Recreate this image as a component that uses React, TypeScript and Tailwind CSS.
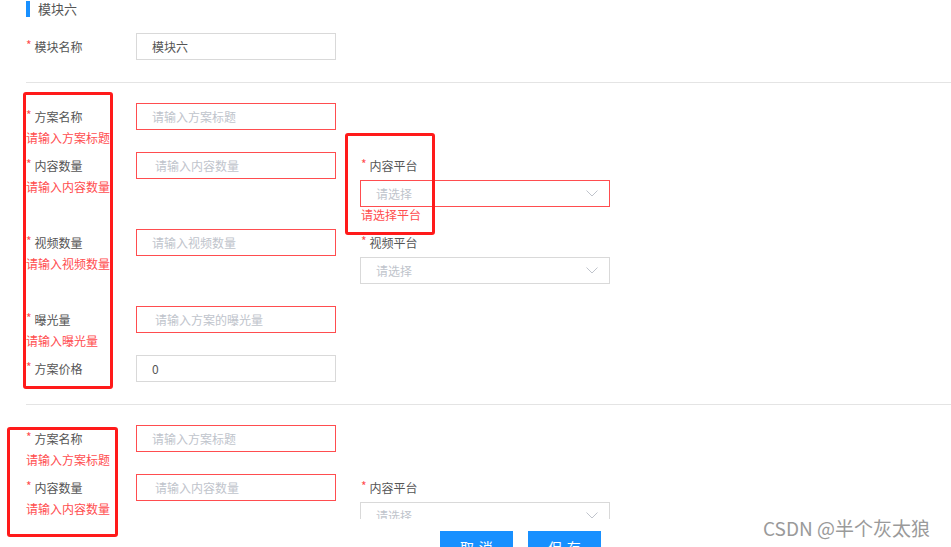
import React from "react";

const FONT = { fontFamily: '"Noto Sans CJK SC", "Noto Sans", sans-serif' };

function Star() {
  return <span className="text-[#ff4d4f] text-[12px] mr-[3px] relative -top-[2px]">*</span>;
}

function Input({ text, placeholder, error, pl = "pl-[15px]" }: { text?: string; placeholder?: string; error?: boolean; pl?: string }) {
  return (
    <div
      className={`w-[200px] h-[27px] border flex items-center text-[12px] ${pl} ${
        error ? "border-[#ff4d4f]" : "border-[#d9d9d9]"
      }`}
    >
      {text ? <span className="text-[#555]">{text}</span> : <span className="text-[#c0c4cc]">{placeholder}</span>}
    </div>
  );
}

function Chevron() {
  return (
    <svg width="12" height="7" viewBox="0 0 12 7" fill="none" className="mr-[11px]">
      <path d="M0.5 0.5 L6 6 L11.5 0.5" stroke="#c0c4cc" strokeWidth="1" />
    </svg>
  );
}

function LeftItem({ label, placeholder, text, error, pl }: { label: string; placeholder?: string; text?: string; error?: string; pl?: string }) {
  return (
    <div className="flex items-start">
      <div className="w-[110px] flex flex-col">
        <div className="h-[27px] flex items-center text-[12px] text-[#555]">
          <Star />
          {label}
        </div>
        <div className="h-[22px] text-[12px] leading-[16px] text-[#ff4d4f] whitespace-nowrap">{error}</div>
      </div>
      <Input placeholder={placeholder} text={text} error={!!error} pl={pl} />
    </div>
  );
}

function RightItem({ label, error }: { label: string; error?: string }) {
  return (
    <div className="flex flex-col">
      <div className="h-[27px] flex items-center text-[12px] text-[#555] pl-[1px]">
        <Star />
        {label}
      </div>
      <div
        className={`mt-[1px] w-[250px] h-[27px] border flex items-center justify-between pl-[15px] text-[12px] text-[#c0c4cc] ${
          error ? "border-[#ff4d4f]" : "border-[#d9d9d9]"
        }`}
      >
        <span>请选择</span>
        <Chevron />
      </div>
      <div className="h-[22px] text-[12px] leading-[16px] text-[#ff4d4f] pl-[1px]">{error}</div>
    </div>
  );
}

export default function App() {
  return (
    <div className="relative h-[547px] w-[951px] overflow-hidden bg-white" style={FONT}>
      <div className="h-[519px] overflow-hidden pl-[26px]">
        {/* title */}
        <div className="flex items-center h-[16px] mt-[1px]">
          <div className="w-[4px] h-[16px] bg-[#1890ff]" />
          <span className="ml-[8px] text-[13px] text-[#555]">模块六</span>
        </div>

        <div className="mt-[16px] flex items-start">
          <div className="w-[110px] h-[27px] flex items-center text-[12px] text-[#555]">
            <Star />
            模块名称
          </div>
          <Input text="模块六" />
        </div>

        <div className="mt-[22px] h-px bg-[#e4e4e4]" />

        {/* plan 1 */}
        <div className="mt-[20px] flex flex-col">
          <LeftItem label="方案名称" placeholder="请输入方案标题" error="请输入方案标题" />
          <div className="flex items-start gap-[24px]">
            <LeftItem label="内容数量" placeholder="请输入内容数量" error="请输入内容数量" pl="pl-[18px]" />
            <RightItem label="内容平台" error="请选择平台" />
          </div>
          <div className="flex items-start gap-[24px]">
            <LeftItem label="视频数量" placeholder="请输入视频数量" error="请输入视频数量" />
            <RightItem label="视频平台" />
          </div>
          <LeftItem label="曝光量" placeholder="请输入方案的曝光量" error="请输入曝光量" pl="pl-[18px]" />
          <LeftItem label="方案价格" text="0" />
        </div>

        <div className="h-px bg-[#e4e4e4]" />

        {/* plan 2 */}
        <div className="mt-[20px] flex flex-col">
          <LeftItem label="方案名称" placeholder="请输入方案标题" error="请输入方案标题" />
          <div className="flex items-start gap-[24px]">
            <LeftItem label="内容数量" placeholder="请输入内容数量" error="请输入内容数量" pl="pl-[18px]" />
            <RightItem label="内容平台" />
          </div>
        </div>
      </div>

      {/* footer */}
      <div className="mt-[12px] ml-[440px] flex gap-[15px]">
        <button className="w-[73px] h-[32px] bg-[#1890ff] text-white text-[14px] tracking-[0.34em] pl-[0.34em]">取消</button>
        <button className="w-[73px] h-[32px] bg-[#1890ff] text-white text-[14px] tracking-[0.34em] pl-[0.34em]">保存</button>
      </div>

      {/* annotation boxes */}
      <div className="absolute left-[23px] top-[92px] w-[90px] h-[297px] border-[3px] border-[#ff1a1a] rounded-[3px]" />
      <div className="absolute left-[345px] top-[133px] w-[90px] h-[102px] border-[3px] border-[#ff1a1a] rounded-[3px]" />
      <div className="absolute left-[7px] top-[427px] w-[111px] h-[110px] border-[3px] border-[#ff1a1a] rounded-[3px]" />

      {/* watermark */}
      <div className="absolute left-[763px] top-[514px] text-[19px] text-[#9a9a9a] whitespace-nowrap">CSDN @半个灰太狼</div>
    </div>
  );
}
